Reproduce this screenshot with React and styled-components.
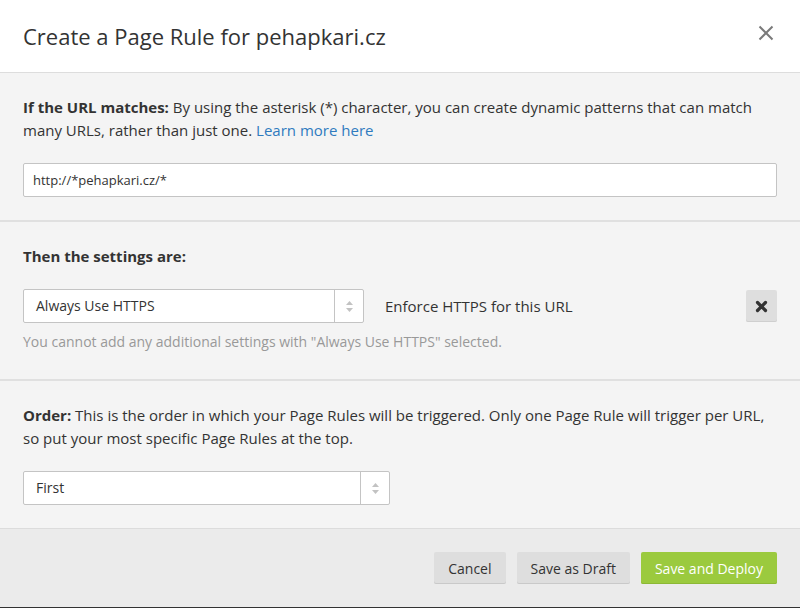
import React from 'react';
import styled, { createGlobalStyle } from 'styled-components';

const GlobalStyle = createGlobalStyle`
  html, body {
    margin: 0;
    padding: 0;
    background: #333;
  }
  * { box-sizing: border-box; }
`;

const Modal = styled.div`
  width: 800px;
  height: 607px;
  display: flex;
  flex-direction: column;
  background: #f4f4f4;
  font-family: "Open Sans", "Liberation Sans", sans-serif;
  font-size: 15px;
  line-height: 23px;
  color: #333;
`;

const Header = styled.div`
  height: 73px;
  flex-shrink: 0;
  display: flex;
  align-items: center;
  justify-content: space-between;
  padding: 0 23px;
  background: #fff;
  border-bottom: 1px solid #ddd;
`;

const Title = styled.h2`
  margin: 0;
  font-size: 22px;
  font-weight: 400;
  color: #333;
`;

const Close = styled.button`
  width: 24px;
  height: 24px;
  padding: 0;
  margin-right: -1px;
  margin-bottom: 6px;
  border: 0;
  background: none;
  display: flex;
  align-items: center;
  justify-content: center;
  cursor: pointer;
`;

const Section = styled.div`
  padding: 23px 23px ${(p) => p.$bottom || 23}px;
  border-bottom: ${(p) => (p.$last ? '1px solid #dcdcdc' : '2px solid #e0e0e0')};
`;

const Text = styled.p`
  margin: 0 0 21px;
  b { font-weight: 700; }
  a { color: #2f7bbf; text-decoration: none; }
`;

const Input = styled.input`
  display: block;
  width: 100%;
  height: 34px;
  padding: 0 9px;
  border: 1px solid #c4c4c4;
  border-radius: 2px;
  background: #fff;
  font-family: inherit;
  font-size: 13px;
  color: #333;
  outline: none;
`;

const Row = styled.div`
  display: flex;
  align-items: center;
`;

const Select = styled.div`
  width: ${(p) => p.$width}px;
  height: 34px;
  display: flex;
  border: 1px solid #c4c4c4;
  border-radius: 2px;
  background: #fff;
`;

const SelectValue = styled.div`
  flex: 1;
  padding-left: 12px;
  line-height: 31px;
  font-size: 14px;
  color: #333;
`;

const SelectArrows = styled.div`
  width: 29px;
  border-left: 1px solid #c4c4c4;
  display: flex;
  align-items: center;
  justify-content: center;
`;

const Description = styled.span`
  margin-left: 21px;
  font-size: 15px;
  color: #333;
`;

const Remove = styled.button`
  margin-left: auto;
  width: 31px;
  height: 32px;
  padding: 0;
  border: 0;
  border-radius: 2px;
  background: #dedede;
  box-shadow: inset 0 -1px 0 #cfcfcf;
  display: flex;
  align-items: center;
  justify-content: center;
`;

const Help = styled.div`
  margin-top: 8px;
  font-size: 14px;
  line-height: 22px;
  color: #999;
`;

const Footer = styled.div`
  flex: 1;
  display: flex;
  justify-content: flex-end;
  align-items: flex-start;
  gap: 10px;
  padding: 23px 23px 0;
  background: #ebebeb;
`;

const Button = styled.button`
  height: 32px;
  padding: 0 14px;
  border: 0;
  border-radius: 2px;
  font-family: inherit;
  font-size: 14px;
  color: ${(p) => (p.$primary ? '#fff' : '#333')};
  background: ${(p) => (p.$primary ? '#9bca3e' : '#dedede')};
  box-shadow: inset 0 -1px 0 ${(p) => (p.$primary ? '#8cb835' : '#c9c9c9')};
  cursor: pointer;
  & + & { margin-left: 1px; }
`;

const Arrows = () => (
  <svg width="9" height="13" viewBox="0 0 9 13">
    <path d="M4.5 1 L8 5 L1 5 Z" fill="#c2c2c2" />
    <path d="M4.5 12 L8 8 L1 8 Z" fill="#c2c2c2" />
  </svg>
);

const App = () => {
  return (
    <>
      <GlobalStyle />
      <Modal>
        <Header>
          <Title>Create a Page Rule for pehapkari.cz</Title>
          <Close aria-label="Close">
            <svg width="16" height="16" viewBox="0 0 16 16">
              <path d="M1.5 1.5 L14.5 14.5 M14.5 1.5 L1.5 14.5" stroke="#7a7a7a" strokeWidth="2" />
            </svg>
          </Close>
        </Header>

        <Section>
          <Text>
            <b>If the URL matches:</b> By using the asterisk (*) character, you can create dynamic patterns
            that can match many URLs, rather than just one. <a href="#">Learn more here</a>
          </Text>
          <Input defaultValue="http://*pehapkari.cz/*" />
        </Section>

        <Section $bottom={26}>
          <Text><b>Then the settings are:</b></Text>
          <Row>
            <Select $width={341}>
              <SelectValue>Always Use HTTPS</SelectValue>
              <SelectArrows><Arrows /></SelectArrows>
            </Select>
            <Description>Enforce HTTPS for this URL</Description>
            <Remove aria-label="Remove">
              <svg width="13" height="13" viewBox="0 0 13 13">
                <path d="M2.5 2.5 L10.5 10.5 M10.5 2.5 L2.5 10.5" stroke="#333" strokeWidth="3.2" strokeLinecap="round" />
              </svg>
            </Remove>
          </Row>
          <Help>You cannot add any additional settings with "Always Use HTTPS" selected.</Help>
        </Section>

        <Section $last>
          <Text>
            <b>Order:</b> This is the order in which your Page Rules will be triggered. Only one Page Rule
            will trigger per URL, so put your most specific Page Rules at the top.
          </Text>
          <Select $width={367}>
            <SelectValue>First</SelectValue>
            <SelectArrows><Arrows /></SelectArrows>
          </Select>
        </Section>

        <Footer>
          <Button>Cancel</Button>
          <Button>Save as Draft</Button>
          <Button $primary>Save and Deploy</Button>
        </Footer>
      </Modal>
    </>
  );
};

export default App;
